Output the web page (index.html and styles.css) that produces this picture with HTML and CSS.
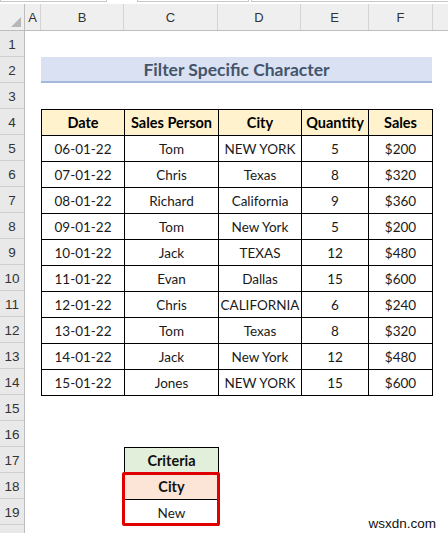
FILE: index.html
```html
<!DOCTYPE html>
<html>
<head>
<meta charset="utf-8">
<link rel="stylesheet" href="styles.css">
</head>
<body>
<div class="app">
  <div class="topbar">
    <div class="namebox"></div>
    <div class="fxbox"></div>
    <div class="fxbox2"></div>
  </div>
  <div class="colheads">
    <div class="corner"><span class="tri"></span></div>
    <div class="ch w-a">A</div>
    <div class="ch w-b">B</div>
    <div class="ch w-c">C</div>
    <div class="ch w-d">D</div>
    <div class="ch w-e">E</div>
    <div class="ch w-f">F</div>
    <div class="ch w-g"></div>
  </div>
  <div class="body">
    <div class="rowheads">
      <div class="rh">1</div><div class="rh">2</div><div class="rh">3</div><div class="rh">4</div>
      <div class="rh">5</div><div class="rh">6</div><div class="rh">7</div><div class="rh">8</div>
      <div class="rh">9</div><div class="rh">10</div><div class="rh">11</div><div class="rh">12</div>
      <div class="rh">13</div><div class="rh">14</div><div class="rh">15</div><div class="rh">16</div>
      <div class="rh">17</div><div class="rh">18</div><div class="rh">19</div><div class="rh"></div>
    </div>
    <div class="sheet">
      <div class="title">Filter Specific Character</div>
      <table class="data">
        <colgroup><col class="c-b"><col class="c-c"><col class="c-d"><col class="c-e"><col class="c-f"></colgroup>
        <tr class="hdr"><th>Date</th><th>Sales Person</th><th>City</th><th>Quantity</th><th>Sales</th></tr>
        <tr><td>06-01-22</td><td>Tom</td><td>NEW YORK</td><td>5</td><td>$200</td></tr>
        <tr><td>07-01-22</td><td>Chris</td><td>Texas</td><td>8</td><td>$320</td></tr>
        <tr><td>08-01-22</td><td>Richard</td><td>California</td><td>9</td><td>$360</td></tr>
        <tr><td>09-01-22</td><td>Tom</td><td>New York</td><td>5</td><td>$200</td></tr>
        <tr><td>10-01-22</td><td>Jack</td><td>TEXAS</td><td>12</td><td>$480</td></tr>
        <tr><td>11-01-22</td><td>Evan</td><td>Dallas</td><td>15</td><td>$600</td></tr>
        <tr><td>12-01-22</td><td>Chris</td><td>CALIFORNIA</td><td>6</td><td>$240</td></tr>
        <tr><td>13-01-22</td><td>Tom</td><td>Texas</td><td>8</td><td>$320</td></tr>
        <tr><td>14-01-22</td><td>Jack</td><td>New York</td><td>12</td><td>$480</td></tr>
        <tr><td>15-01-22</td><td>Jones</td><td>NEW YORK</td><td>15</td><td>$600</td></tr>
      </table>
      <div class="criteria">
        <table class="crit">
          <tr class="crit-h"><th>Criteria</th></tr>
          <tr class="crit-city"><th>City</th></tr>
          <tr><td>New</td></tr>
        </table>
        <div class="redbox"></div>
      </div>
      <div class="watermark">wsxdn.com</div>
    </div>
  </div>
</div>
</body>
</html>
```
FILE: styles.css
```css
* { box-sizing: border-box; }
html, body { margin: 0; padding: 0; background: #fff; }
body { width: 448px; height: 533px; overflow: hidden; font-family: "Lato", "Open Sans", sans-serif; color: #111; }

.app { display: flex; flex-direction: column; height: 533px; }

.topbar { height: 4px; display: flex; background: #fff; }
.namebox { width: 107px; height: 2px; border: 1px solid #c6c6c6; border-top: 0; }
.fxbox { width: 112px; height: 2px; margin-left: 30px; border: 1px solid #c6c6c6; border-top: 0; }
.fxbox2 { flex: 1; height: 2px; margin-left: 2px; border: 1px solid #c6c6c6; border-top: 0; border-right: 0; }

.colheads { display: flex; height: 27px; background: #efefef; border-bottom: 1px solid #bdbdbd; font-family: "Liberation Sans", Arial, sans-serif; }
.corner { width: 25px; border-right: 1px solid #bdbdbd; position: relative; }
.tri { position: absolute; right: 3px; bottom: 3px; width: 0; height: 0; border-left: 10px solid transparent; border-bottom: 10px solid #b7b7b7; }
.ch { display: flex; align-items: center; justify-content: center; font-size: 13px; color: #333; border-right: 1px solid #d4d4d4; padding-top: 1px; }
.w-a { width: 16px; }
.w-b { width: 83px; }
.w-c { width: 94px; }
.w-d { width: 83px; }
.w-e { width: 68px; }
.w-f { width: 64px; }
.w-g { flex: 1; border-right: 0; }

.body { display: flex; flex: 1; min-height: 0; }
.rowheads { width: 25px; background: #e9e9e9; border-right: 1px solid #bdbdbd; display: flex; flex-direction: column; font-family: "Liberation Sans", Arial, sans-serif; }
.rh { height: 26px; flex: none; display: flex; align-items: center; justify-content: center; font-size: 13.5px; color: #333; border-bottom: 1px solid #cfcfcf; padding-top: 2px; }

.sheet { position: relative; flex: 1; display: grid;
  grid-template-columns: 16px 83px 94px 83px 67px 64px 1fr;
  grid-template-rows: 26px 26px 26px repeat(11, 26px) 26px 26px 26px 26px 26px 1fr; }

.title { grid-column: 2 / 7; grid-row: 2; background: #d9e1f2; border-bottom: 2px solid #a4b7df; font-weight: bold; font-size: 17.5px; color: #44546a; display: flex; align-items: center; justify-content: center; padding-top: 1px; }

table { border-collapse: collapse; }
.data { grid-column: 2 / 7; grid-row: 4 / 15; width: 392px; height: 287px; align-self: start; font-size: 13.5px; }
.data th, .data td { border: 1px solid #000; text-align: center; padding: 0; height: 26px; }
.data td { font-weight: normal; color: #1a1a1a; }
.hdr th { background: #fff2cc; font-weight: bold; color: #000; font-size: 14.5px; }
.c-b { width: 83px; }
.c-c { width: 94px; }
.c-d { width: 83px; }
.c-e { width: 67px; }
.c-f { width: 64px; }

.criteria { grid-column: 3; grid-row: 17 / 20; position: relative; }
.crit { width: 95px; height: 79px; font-size: 14.5px; }
.crit th, .crit td { border: 1px solid #000; text-align: center; padding: 0; height: 26px; }
.crit td { color: #1a1a1a; font-size: 13.5px; }
.crit-h th { background: #e2efda; }
.crit-city th { background: #fce4d6; }
.redbox { position: absolute; left: -2px; top: 25px; width: 98px; height: 54px; border: 3px solid #e00000; border-radius: 2px; pointer-events: none; }

.watermark { position: absolute; right: 12px; bottom: 2px; font-family: "Liberation Sans", Arial, sans-serif; font-size: 13.5px; color: #111; }
```
